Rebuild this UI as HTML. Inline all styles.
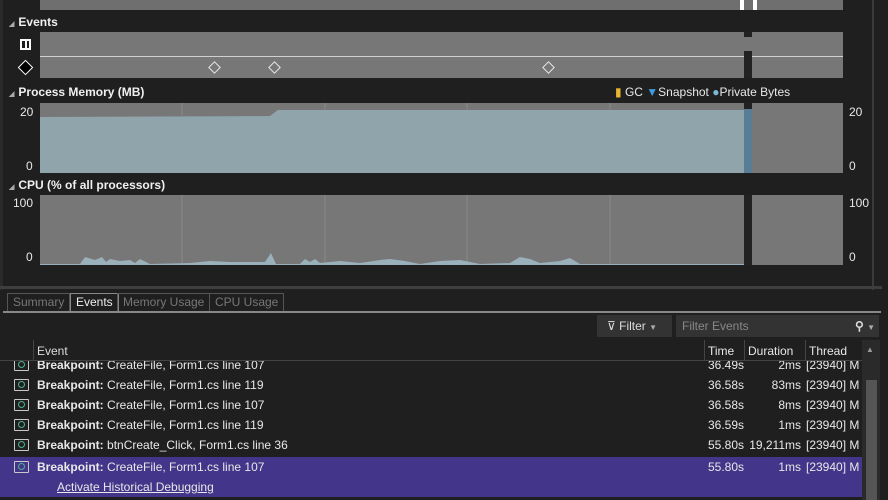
<!DOCTYPE html><html><head><style>
*{margin:0;padding:0;box-sizing:border-box}
body{width:888px;height:500px;background:#1f1f1f;font-family:"Liberation Sans",sans-serif;font-size:12px;color:#e8e8e8;position:relative;overflow:hidden}
.a{position:absolute}
.lbl{font-weight:bold;font-size:12px;color:#f0f0f0}
.tri{font-size:7px;color:#aaa;margin-right:4px}
.row{position:absolute;left:0;width:862px;height:20px;line-height:20px}
.row .ic{position:absolute;left:14px;top:4px;width:15px;height:12px;border:1.5px solid #c8c8c8;border-radius:1px}
.row .ic:after{content:"";position:absolute;left:3px;top:1px;width:5px;height:5px;border:1.5px solid #4fb38f;border-radius:50%}
.row .t{position:absolute;left:37px}
.row .tm{position:absolute;left:708px}
.row .du{position:absolute;right:61px}
.row .th{position:absolute;left:806px;white-space:nowrap}
.tab{position:absolute;top:293px;height:19px;border:1px solid #555;line-height:17px;padding:0 5px;color:#777}
</style></head><body>
<div class="a" style="left:872px;top:0;width:2px;height:290px;background:#3a3a3a"></div>
<div class="a" style="left:0;top:0;width:3px;height:290px;background:#2a2a2a"></div>
<div class="a" style="left:40px;top:0;width:803px;height:10px;background:#6f6f6f"></div>
<div class="a" style="left:740px;top:0;width:4px;height:10px;background:#fff"></div>
<div class="a" style="left:753px;top:0;width:4px;height:10px;background:#fff"></div>
<div class="a lbl" style="left:9px;top:15px"><span class="tri">◢</span>Events</div>
<div class="a" style="left:40px;top:32px;width:803px;height:46px;background:#777"></div>
<div class="a" style="left:40px;top:56px;width:803px;height:1px;background:#d0d0d0"></div>
<div class="a" style="left:744px;top:32px;width:8px;height:46px;background:#222"></div>
<div class="a" style="left:744px;top:37px;width:8px;height:14px;background:#777"></div>
<div class="a" style="left:20px;top:39px;width:11px;height:11px;border:2px solid #fff"></div>
<div class="a" style="left:25px;top:39px;width:2px;height:11px;background:#fff"></div>
<div class="a" style="left:20px;top:62px;width:11px;height:11px;border:1.5px solid #fff;background:#000;transform:rotate(45deg)"></div>
<div class="a" style="left:210px;top:63px;width:9px;height:9px;border:1px solid #e8e8e8;transform:rotate(45deg)"></div>
<div class="a" style="left:270px;top:63px;width:9px;height:9px;border:1px solid #e8e8e8;transform:rotate(45deg)"></div>
<div class="a" style="left:544px;top:63px;width:9px;height:9px;border:1px solid #e8e8e8;transform:rotate(45deg)"></div>
<div class="a lbl" style="left:9px;top:85px"><span class="tri">◢</span>Process Memory (MB)</div>
<div class="a" style="left:615px;top:85px;font-size:12px"><span style="color:#e8b530">▮</span> GC <span style="color:#3d9be0">▼</span>Snapshot <span style="color:#7ab8d8">●</span>Private Bytes</div>
<div class="a" style="left:20px;top:105px">20</div><div class="a" style="left:26px;top:159px">0</div>
<div class="a" style="left:849px;top:105px">20</div><div class="a" style="left:849px;top:159px">0</div>
<svg class="a" style="left:40px;top:103px" width="803" height="70">
<rect width="803" height="70" fill="#777"/>
<path d="M0 14 L230 13 L238 7 L704 7 L704 70 L0 70Z" fill="#90a4ac"/>
<rect x="704" y="0" width="8" height="70" fill="#222"/>
<rect x="704" y="6" width="8" height="64" fill="#5a7d96"/>
<g stroke="#8a8a8a" stroke-width="1"><line x1="142" y1="0" x2="142" y2="14"/><line x1="285" y1="0" x2="285" y2="7"/><line x1="427" y1="0" x2="427" y2="7"/><line x1="570" y1="0" x2="570" y2="7"/></g>
</svg>
<div class="a lbl" style="left:9px;top:178px"><span class="tri">◢</span>CPU (% of all processors)</div>
<div class="a" style="left:13px;top:196px">100</div><div class="a" style="left:26px;top:250px">0</div>
<div class="a" style="left:849px;top:196px">100</div><div class="a" style="left:849px;top:250px">0</div>
<svg class="a" style="left:40px;top:195px" width="803" height="70">
<rect width="803" height="70" fill="#777"/>
<g stroke="#8a8a8a"><line x1="142" y1="0" x2="142" y2="70"/><line x1="285" y1="0" x2="285" y2="70"/><line x1="427" y1="0" x2="427" y2="70"/><line x1="570" y1="0" x2="570" y2="70"/></g>
<path d="M0 69 L40 69 L45 62 L55 65 L62 62 L66 67 L70 64 L80 66 L90 65 L95 68 L100 64 L110 69 L150 68 L170 66 L190 67 L225 67 L231 58 L236 69 L260 69 L265 64 L270 67 L275 64 L280 68 L300 66 L320 68 L340 65 L350 64 L365 66 L380 69 L400 66 L420 65 L440 69 L470 68 L480 62 L490 64 L500 68 L520 66 L530 63 L540 69 L704 69 L704 70 L0 70Z" fill="#9ab0bb"/>
<rect x="704" y="0" width="8" height="70" fill="#222"/>
</svg>
<div class="a" style="left:0;top:286px;width:882px;height:3px;background:#3e3e3e"></div>
<div class="tab" style="left:7px">Summary</div>
<div class="tab" style="left:70px;color:#eee;border-color:#888">Events</div>
<div class="tab" style="left:117px">Memory Usage</div>
<div class="tab" style="left:209px">CPU Usage</div>
<div class="a" style="left:3px;top:311px;width:878px;height:2px;background:#888"></div>
<div class="a" style="left:597px;top:315px;width:75px;height:22px;background:#333;line-height:22px;padding-left:10px;color:#ddd">⊽ Filter <span style="font-size:8px;color:#aaa">▼</span></div>
<div class="a" style="left:676px;top:315px;width:203px;height:22px;background:#333;line-height:22px;padding-left:6px;color:#888">Filter Events<span style="position:absolute;right:4px;color:#ddd;font-weight:bold">⚲ <span style="font-size:8px;color:#aaa">▼</span></span></div>
<div class="a" style="left:33px;top:340px;width:1px;height:21px;background:#444"></div>
<div class="a" style="left:37px;top:344px;color:#ddd">Event</div>
<div class="a" style="left:704px;top:340px;width:1px;height:21px;background:#444"></div>
<div class="a" style="left:708px;top:344px">Time</div>
<div class="a" style="left:744px;top:340px;width:1px;height:21px;background:#444"></div>
<div class="a" style="left:748px;top:344px">Duration</div>
<div class="a" style="left:805px;top:340px;width:1px;height:21px;background:#444"></div>
<div class="a" style="left:809px;top:344px">Thread</div>
<div class="a" style="left:0;top:360px;width:862px;height:1px;background:#444"></div>
<div class="a" style="left:0;top:361px;width:862px;height:139px;overflow:hidden">
<div class="row" style="top:-6px"><div class="ic"></div><div class="t"><b>Breakpoint:</b> CreateFile, Form1.cs line 107</div><div class="tm">36.49s</div><div class="du">2ms</div><div class="th">[23940] M</div></div>
<div class="row" style="top:14px"><div class="ic"></div><div class="t"><b>Breakpoint:</b> CreateFile, Form1.cs line 119</div><div class="tm">36.58s</div><div class="du">83ms</div><div class="th">[23940] M</div></div>
<div class="row" style="top:34px"><div class="ic"></div><div class="t"><b>Breakpoint:</b> CreateFile, Form1.cs line 107</div><div class="tm">36.58s</div><div class="du">8ms</div><div class="th">[23940] M</div></div>
<div class="row" style="top:54px"><div class="ic"></div><div class="t"><b>Breakpoint:</b> CreateFile, Form1.cs line 119</div><div class="tm">36.59s</div><div class="du">1ms</div><div class="th">[23940] M</div></div>
<div class="row" style="top:74px"><div class="ic"></div><div class="t"><b>Breakpoint:</b> btnCreate_Click, Form1.cs line 36</div><div class="tm">55.80s</div><div class="du">19,211ms</div><div class="th">[23940] M</div></div>
<div class="row" style="top:96px;height:40px;background:#43358a"><div class="ic" style="top:4px"></div><div class="t" style="top:0"><b>Breakpoint:</b> CreateFile, Form1.cs line 107</div><div class="tm">55.80s</div><div class="du">1ms</div><div class="th">[23940] M</div><div class="a" style="left:57px;top:20px;text-decoration:underline">Activate Historical Debugging</div></div>
</div>
<div class="a" style="left:862px;top:340px;width:18px;height:160px;background:#2a2a2a"></div>
<div class="a" style="left:866px;top:345px;color:#999;font-size:8px">▲</div>
<div class="a" style="left:866px;top:380px;width:11px;height:120px;background:#555"></div>
</body></html>
